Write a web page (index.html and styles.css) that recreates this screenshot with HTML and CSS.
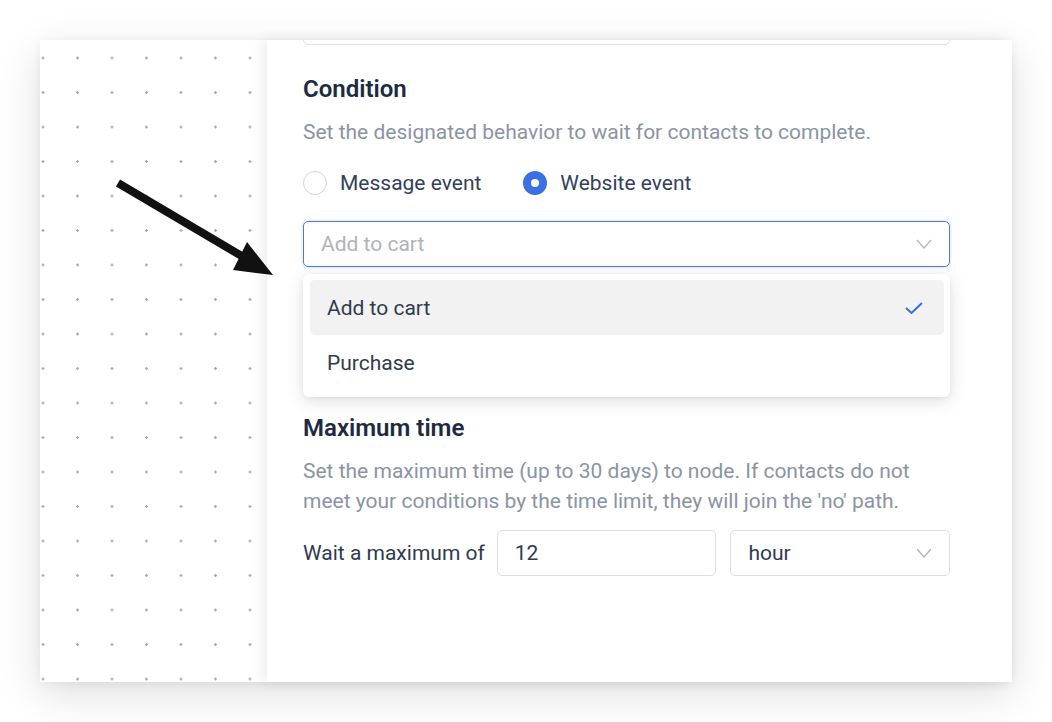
FILE: index.html
```html
<!DOCTYPE html>
<html lang="en">
<head>
<meta charset="utf-8">
<title>Wait for condition</title>
<link rel="stylesheet" href="styles.css">
</head>
<body>
<div class="frame">
  <div class="canvas"></div>
  <div class="panel">
    <div class="field cut"></div>

    <h2 class="heading first">Condition</h2>
    <p class="desc">Set the designated behavior to wait for contacts to complete.</p>

    <div class="radios">
      <label class="radio"><span class="dot"></span>Message event</label>
      <label class="radio checked"><span class="dot"></span>Website event</label>
    </div>

    <div class="select-wrap">
      <div class="field select focused">
        <span class="placeholder">Add to cart</span>
        <svg class="chev" width="16" height="10" viewBox="0 0 16 10"><path d="M1 1 L8 9 L15 1" fill="none" stroke="#b0b3ba" stroke-width="1.2"/></svg>
      </div>
      <div class="menu">
        <div class="option active">
          <span>Add to cart</span>
          <svg width="18" height="12" viewBox="0 0 18 12"><path d="M1 6 L6.5 11 L17 1" fill="none" stroke="#3a6fd8" stroke-width="2"/></svg>
        </div>
        <div class="option"><span>Purchase</span></div>
      </div>
    </div>

    <h2 class="heading second">Maximum time</h2>
    <p class="desc two">Set the maximum time (up to 30 days) to node. If contacts do not meet your conditions by the time limit, they will join the 'no' path.</p>

    <div class="wait-row">
      <span class="wait-label">Wait a maximum of</span>
      <div class="field num">12</div>
      <div class="field select unit">
        <span>hour</span>
        <svg class="chev" width="16" height="10" viewBox="0 0 16 10"><path d="M1 1 L8 9 L15 1" fill="none" stroke="#b0b3ba" stroke-width="1.2"/></svg>
      </div>
    </div>
  </div>

  <svg class="arrow" width="300" height="300" viewBox="0 0 300 300">
    <line x1="78" y1="143" x2="205" y2="218" stroke="#111" stroke-width="8"/>
    <polygon points="233,235 207,202 193,230" fill="#111"/>
  </svg>
</div>
</body>
</html>
```

FILE: styles.css
```css
* { box-sizing: border-box; }
html, body { margin: 0; padding: 0; background: #fff; }
body {
  font-family: Roboto, "Liberation Sans", Arial, sans-serif;
  width: 1052px;
  height: 722px;
  overflow: hidden;
}
.frame {
  position: relative;
  margin: 40px 0 0 40px;
  width: 972px;
  height: 642px;
  display: flex;
  background: #fff;
  box-shadow: 0 12px 40px rgba(0, 0, 0, 0.13), 0 2px 10px rgba(0, 0, 0, 0.05);
}
.canvas {
  width: 227px;
  flex: none;
  background-color: #fff;
  background-image: radial-gradient(circle, #a9a9a9 1px, rgba(255,255,255,0) 1.5px);
  background-size: 34.5px 34.5px;
  background-position: -14.25px 0.75px;
}
.panel {
  position: relative;
  z-index: 1;
  flex: 1;
  background: #fff;
  padding: 0 62px 0 36px;
  overflow: hidden;
  box-shadow: -5px 0 12px rgba(0, 0, 0, 0.07);
}
.field {
  border: 1px solid #dcdfe6;
  border-radius: 5px;
  height: 46px;
  background: #fff;
  display: flex;
  align-items: center;
  padding: 0 17px;
  font-size: 21px;
  color: #2f3b4e;
}
.field.cut { margin-top: -41px; }
.heading {
  margin: 0;
  font-size: 24px;
  line-height: 28px;
  font-weight: 600;
  color: #1c2b3f;
}
.heading.first { margin-top: 30px; }
.heading.second { margin-top: 147px; }
.desc {
  margin: 14px 0 0;
  font-size: 21px;
  line-height: 30px;
  color: #8a94a3;
}
.radios {
  margin-top: 21px;
  height: 30px;
  display: flex;
  align-items: center;
  gap: 42px;
}
.radio {
  display: flex;
  align-items: center;
  gap: 13px;
  font-size: 21px;
  color: #33415a;
}
.radio .dot {
  width: 24px;
  height: 24px;
  border-radius: 50%;
  border: 1px solid #d3d5da;
  background: #fff;
}
.radio.checked .dot {
  border: 8px solid #3a70e2;
  background: #fff;
}
.select-wrap {
  position: relative;
  margin-top: 23px;
}
.select { justify-content: space-between; }
.select.focused {
  border-color: #4b79d8;
  box-shadow: 0 0 0 2px rgba(75, 121, 216, 0.08);
}
.placeholder { color: #b1b3b8; }
.menu {
  position: absolute;
  left: 0;
  right: 0;
  top: 53px;
  background: #fff;
  border-radius: 6px;
  padding: 6px 6px 6px 7px;
  box-shadow: 0 4px 18px rgba(0, 0, 0, 0.13), 0 1px 4px rgba(0, 0, 0, 0.05);
  z-index: 3;
}
.option {
  height: 56px;
  border-radius: 5px;
  display: flex;
  align-items: center;
  justify-content: space-between;
  padding: 0 21px 0 17px;
  font-size: 21px;
  color: #2f3b4e;
}
.option.active { background: #f2f2f3; height: 55px; }
.wait-row {
  margin-top: 14px;
  display: flex;
  align-items: center;
}
.wait-label {
  font-size: 21px;
  color: #2f3b4e;
  white-space: nowrap;
  margin-right: 12px;
}
.num, .unit { flex: 1; height: 46px; }
.num { margin-right: 14px; }
.unit { justify-content: space-between; }
.arrow {
  position: absolute;
  left: 0;
  top: 0;
  z-index: 5;
}
```
